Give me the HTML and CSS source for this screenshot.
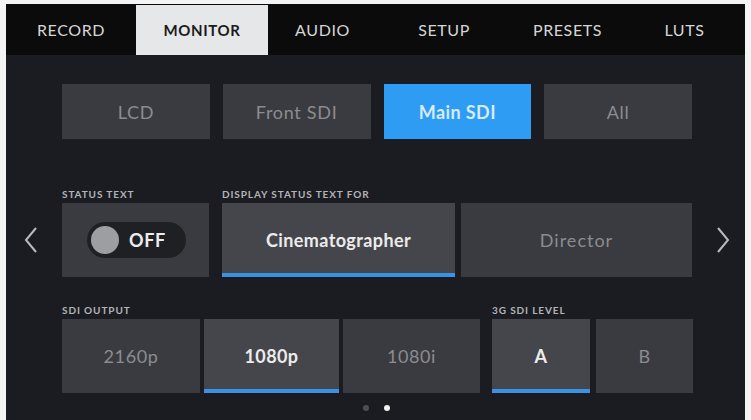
FILE: index.html
```html
<!DOCTYPE html>
<html>
<head>
<meta charset="utf-8">
<link rel="stylesheet" href="styles.css">
</head>
<body>
<div class="screen">
  <div class="tabs">
    <div class="tab t-record">RECORD</div>
    <div class="tab t-monitor active">MONITOR</div>
    <div class="tab t-audio">AUDIO</div>
    <div class="tab t-setup">SETUP</div>
    <div class="tab t-presets">PRESETS</div>
    <div class="tab t-luts">LUTS</div>
  </div>

  <div class="row1">
    <div class="btn">LCD</div>
    <div class="btn">Front SDI</div>
    <div class="btn blue">Main SDI</div>
    <div class="btn">All</div>
  </div>

  <div class="row2">
    <div class="arrow">
      <svg width="14" height="26" viewBox="0 0 14 26"><polyline points="12,1 2,13 12,25" fill="none" stroke="#b9babd" stroke-width="2"/></svg>
    </div>
    <div class="group g-status">
      <div class="label">STATUS TEXT</div>
      <div class="box">
        <div class="toggle"><span class="knob"></span><span class="toff">OFF</span></div>
      </div>
    </div>
    <div class="group g-display">
      <div class="label">DISPLAY STATUS TEXT FOR</div>
      <div class="pair">
        <div class="box sel w-cine">Cinematographer</div>
        <div class="box dim w-dir">Director</div>
      </div>
    </div>
    <div class="arrow right">
      <svg width="14" height="26" viewBox="0 0 14 26"><polyline points="2,1 12,13 2,25" fill="none" stroke="#b9babd" stroke-width="2"/></svg>
    </div>
  </div>

  <div class="row3">
    <div class="group g-sdi">
      <div class="label">SDI OUTPUT</div>
      <div class="pair tight">
        <div class="box dim w-2160">2160p</div>
        <div class="box sel w-1080p">1080p</div>
        <div class="box dim w-1080i">1080i</div>
      </div>
    </div>
    <div class="group g-level">
      <div class="label">3G SDI LEVEL</div>
      <div class="pair">
        <div class="box sel w-a">A</div>
        <div class="box dim w-b">B</div>
      </div>
    </div>
  </div>

  <div class="dots"><span class="dot"></span><span class="dot on"></span></div>
</div>
</body>
</html>
```
FILE: styles.css
```css
html, body {
  margin: 0;
  padding: 0;
  background: #f4f4f4;
}
body {
  font-family: Lato, "Open Sans", "Liberation Sans", sans-serif;
}
.screen {
  margin: 4px 6px 0 6px;
  width: 739px;
  height: 416px;
  background: #1b1c21;
  overflow: hidden;
}
.tabs {
  display: flex;
  height: 51px;
  background: #0b0b0c;
}
.tab {
  display: flex;
  align-items: center;
  justify-content: center;
  color: #d6d6d6;
  font-size: 16px;
  letter-spacing: 0.6px;
  padding-bottom: 1px;
  box-sizing: border-box;
}
.tab.active {
  background: #e6e7e9;
  color: #1b1b1d;
  font-weight: 700;
  font-size: 15px;
  margin-top: 1px;
}
.t-record { width: 130px; }
.t-monitor { width: 132px; }
.t-audio { width: 109px; }
.t-setup { width: 134px; }
.t-presets { width: 113px; }
.t-luts { width: 121px; }

.row1 {
  display: grid;
  grid-template-columns: repeat(4, 1fr);
  column-gap: 13px;
  margin: 29px 53px 0 56px;
  height: 55px;
}
.btn {
  background: #3a3b40;
  color: #8b8c90;
  font-size: 18px;
  letter-spacing: 0.7px;
  display: flex;
  align-items: center;
  justify-content: center;
}
.btn.blue {
  background: #2e9cf2;
  color: #d6ebfb;
  font-weight: 700;
  letter-spacing: 0.4px;
}

.row2 {
  display: flex;
  margin-top: 50px;
  align-items: flex-end;
}
.arrow {
  width: 56px;
  height: 74px;
  display: flex;
  align-items: center;
  justify-content: center;
  padding-right: 6px;
  box-sizing: border-box;
}
.arrow.right {
  width: 53px;
  padding-right: 0;
  padding-left: 8px;
}
.group {
  display: flex;
  flex-direction: column;
}
.label {
  font-size: 10px;
  font-weight: 700;
  letter-spacing: 0.9px;
  color: #b3b4b7;
  height: 14px;
  line-height: 10px;
}
.g-status { width: 147px; margin-right: 13px; }
.g-status .box {
  background: #3a3b40;
}
.box {
  height: 74px;
  display: flex;
  align-items: center;
  justify-content: center;
  font-size: 18px;
  letter-spacing: 0.6px;
  box-sizing: border-box;
}
.pair {
  display: flex;
  gap: 6px;
}
.pair.tight {
  gap: 4px;
}
.box.sel {
  background: #45464b;
  color: #ececec;
  font-weight: 700;
  border-bottom: 4px solid #3a92e6;
  padding-top: 4px;
  letter-spacing: 0.4px;
}
.box.dim {
  background: #3a3b40;
  color: #8b8c90;
}
.w-cine { width: 233px; }
.w-dir { width: 231px; letter-spacing: 1px; }

.toggle {
  width: 99px;
  height: 36px;
  border-radius: 18px;
  background: #1f2024;
  display: flex;
  align-items: center;
  padding-left: 4px;
  box-sizing: border-box;
  margin-left: 2px;
}
.knob {
  width: 28px;
  height: 28px;
  border-radius: 50%;
  background: #9d9ea2;
}
.toff {
  color: #ededed;
  font-weight: 700;
  font-size: 18px;
  margin-left: 10px;
  letter-spacing: 0.6px;
}

.row3 {
  display: flex;
  margin: 28px 0 0 56px;
}
.g-sdi { margin-right: 12px; }
.w-2160 { width: 138px; }
.w-1080p { width: 135px; }
.w-1080i { width: 137px; }
.w-a { width: 98px; }
.w-b { width: 97px; }

.dots {
  display: flex;
  justify-content: center;
  gap: 15px;
  margin-top: 12px;
  padding-left: 2px;
}
.dot {
  width: 6px;
  height: 6px;
  border-radius: 50%;
  background: #4e4f54;
}
.dot.on {
  background: #f2f2f2;
}
```
